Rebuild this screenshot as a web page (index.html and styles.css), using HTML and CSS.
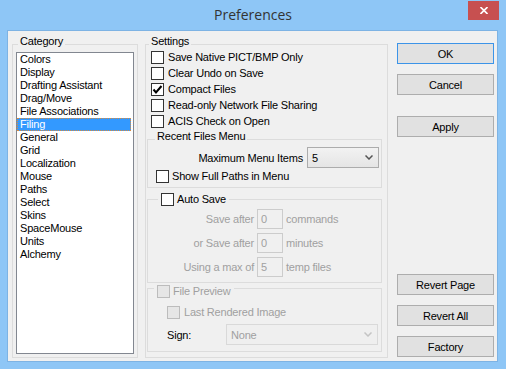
FILE: index.html
```html
<!DOCTYPE html>
<html lang="en">
<head>
    <meta charset="UTF-8">
    <title>Preferences</title>
    <link rel="stylesheet" href="styles.css">
</head>
<body>
    <div class="window">
        <div class="titlebar">
            <span class="title">Preferences</span>
            <div class="close">
                <svg width="8" height="7" viewBox="0 0 8 7"><path d="M0.5 0 L7.5 7 M7.5 0 L0.5 7" stroke="#fff" stroke-width="1.6"/></svg>
            </div>
        </div>

        <div class="client">
            <!-- Category -->
            <div class="group category">
                <div class="group-title">Category</div>
                <ul class="listbox">
                    <li>Colors</li>
                    <li>Display</li>
                    <li>Drafting Assistant</li>
                    <li>Drag/Move</li>
                    <li>File Associations</li>
                    <li class="selected">Filing</li>
                    <li>General</li>
                    <li>Grid</li>
                    <li>Localization</li>
                    <li>Mouse</li>
                    <li>Paths</li>
                    <li>Select</li>
                    <li>Skins</li>
                    <li>SpaceMouse</li>
                    <li>Units</li>
                    <li>Alchemy</li>
                </ul>
            </div>

            <!-- Settings -->
            <div class="group settings">
                <div class="group-title">Settings</div>
                <div class="checks">
                    <div class="check"><span class="box"></span>Save Native PICT/BMP Only</div>
                    <div class="check"><span class="box"></span>Clear Undo on Save</div>
                    <div class="check"><span class="box"><svg width="11" height="11" viewBox="0 0 11 11"><path d="M1.5 5.5 L4 8.5 L9.5 2" fill="none" stroke="#000" stroke-width="2"/></svg></span>Compact Files</div>
                    <div class="check"><span class="box"></span>Read-only Network File Sharing</div>
                    <div class="check"><span class="box"></span>ACIS Check on Open</div>
                </div>

                <div class="group sub recent">
                    <div class="group-title">Recent Files Menu</div>
                    <div class="menu-row">
                        <span>Maximum Menu Items</span>
                        <div class="combo">
                            <span>5</span>
                            <svg width="8" height="5" viewBox="0 0 8 5"><path d="M0.5 0.5 L4 4 L7.5 0.5" fill="none" stroke="#555" stroke-width="1.5"/></svg>
                        </div>
                    </div>
                    <div class="check paths"><span class="box"></span>Show Full Paths in Menu</div>
                </div>

                <div class="group sub autosave">
                    <div class="group-title check-title"><span class="box"></span>Auto Save</div>
                    <div class="save-rows disabled">
                        <span class="save-label">Save after</span><span class="field">0</span><span>commands</span>
                        <span class="save-label">or Save after</span><span class="field">0</span><span>minutes</span>
                        <span class="save-label">Using a max of</span><span class="field">5</span><span>temp files</span>
                    </div>
                </div>

                <div class="group sub preview">
                    <div class="group-title check-title disabled"><span class="box off"></span>File Preview</div>
                    <div class="check last disabled"><span class="box off"></span>Last Rendered Image</div>
                    <div class="sign-row">
                        <span>Sign:</span>
                        <div class="combo off">
                            <span>None</span>
                            <svg width="8" height="5" viewBox="0 0 8 5"><path d="M0.5 0.5 L4 4 L7.5 0.5" fill="none" stroke="#c4c4c4" stroke-width="1.5"/></svg>
                        </div>
                    </div>
                </div>
            </div>

            <!-- Buttons -->
            <div class="buttons">
                <button class="btn default">OK</button>
                <button class="btn cancel">Cancel</button>
                <button class="btn apply">Apply</button>
                <button class="btn revert">Revert Page</button>
                <button class="btn">Revert All</button>
                <button class="btn">Factory</button>
            </div>
        </div>
    </div>
</body>
</html>
```

FILE: styles.css
```css
* {
    box-sizing: border-box;
}
body {
    margin: 0;
    background-color: #8ec6f6;
    font-family: "Liberation Sans", Arial, sans-serif;
    font-size: 11px;
    letter-spacing: -0.2px;
    color: #000;
}
.window {
    width: 506px;
    height: 369px;
}
.titlebar {
    position: relative;
    height: 30px;
    text-align: center;
}
.title {
    font-family: "Open Sans", "Noto Sans", sans-serif;
    font-size: 14px;
    letter-spacing: 0;
    line-height: 30px;
    color: #333;
}
.close {
    position: absolute;
    top: 1px;
    right: 7px;
    width: 31px;
    height: 19px;
    background-color: #c75050;
    display: flex;
    align-items: center;
    justify-content: center;
}
.client {
    margin: 0 8px 0 7px;
    height: 332px;
    border: 1px solid #7db3e4;
    background-color: #f0f0f0;
    display: grid;
    grid-template-columns: 126px 244px 98px;
    column-gap: 7px;
    padding: 12px 2px 3px 4px;
}
.group {
    border: 1px solid #dcdcdc;
    display: flex;
    flex-direction: column;
}
.group-title {
    align-self: flex-start;
    background-color: #f0f0f0;
    padding: 0 2px;
    line-height: 13px;
    margin-top: -10px;
}
.category, .settings {
    margin-top: 1px;
}
.category .group-title {
    margin-left: 5px;
}
.listbox {
    flex: 1;
    list-style: none;
    margin: 4px 3px 3px;
    padding: 0 2px 0 0;
    border: 1px solid #828790;
    background-color: #fff;
}
.listbox li {
    line-height: 13px;
    height: 13px;
    padding-left: 3px;
    white-space: nowrap;
}
.listbox li.selected {
    background-color: #3399ff;
    color: #fff;
    outline: 1px dotted #d98a3c;
    outline-offset: -1px;
}
.settings {
    margin-right: 1px;
}
.settings > .group-title {
    margin-left: 3px;
}
.checks {
    margin-top: 1px;
}
.check {
    display: flex;
    align-items: center;
    gap: 4px;
    height: 16px;
    padding-left: 5px;
    white-space: nowrap;
}
.box {
    width: 13px;
    height: 13px;
    flex: none;
    border: 1px solid #333;
    background-color: #fff;
    display: flex;
    align-items: center;
    justify-content: center;
}
.box.off {
    border-color: #bcbcbc;
    background-color: #e6e6e6;
}
.disabled {
    color: #a0a0a0;
}
.sub {
    margin-left: 1px;
    margin-right: 5px;
}
.recent {
    margin-top: 10px;
    padding-bottom: 3px;
}
.recent .group-title {
    margin-left: 7px;
}
.menu-row {
    display: flex;
    justify-content: flex-end;
    align-items: center;
    gap: 4px;
    margin-top: 4px;
    padding-right: 2px;
}
.combo {
    width: 72px;
    height: 21px;
    border: 1px solid #acacac;
    background: linear-gradient(#f2f2f2, #e5e5e5);
    display: flex;
    align-items: center;
    justify-content: space-between;
    padding: 0 5px 0 4px;
}
.combo.off {
    width: 152px;
    margin-left: auto;
    border-color: #d9d9d9;
    background: #efefef;
    color: #a0a0a0;
}
.recent .paths {
    padding-left: 8px;
    gap: 3px;
}
.autosave {
    margin-top: 11px;
    padding-bottom: 3px;
}
.check-title {
    display: flex;
    align-items: center;
    gap: 3px;
    height: 16px;
    padding: 0 3px;
    white-space: nowrap;
}
.autosave .check-title {
    margin-top: -9px;
    margin-left: 10px;
}
.save-rows {
    display: grid;
    grid-template-columns: 106px 26px auto;
    grid-auto-rows: 24px;
    column-gap: 3px;
    align-items: center;
}
.save-label {
    text-align: right;
}
.field {
    height: 20px;
    line-height: 18px;
    border: 1px solid #cccccc;
    background-color: #f0f0f0;
    padding-left: 3px;
}
.preview {
    margin-top: 5px;
    padding-bottom: 6px;
}
.preview .check-title {
    margin-top: -6px;
    margin-left: 6px;
}
.preview .last {
    margin-top: 5px;
    padding-left: 19px;
}
.sign-row {
    display: flex;
    align-items: center;
    margin-top: 4px;
    padding: 0 3px 0 19px;
}
.buttons {
    display: flex;
    flex-direction: column;
    padding-bottom: 1px;
    margin-left: 1px;
}
.btn {
    height: 21px;
    flex: none;
    border: 1px solid #adadad;
    background-color: #e1e1e1;
    font-family: "Liberation Sans", Arial, sans-serif;
    font-size: 11px;
    letter-spacing: -0.2px;
    color: #000;
    padding: 0;
    margin-top: 10px;
}
.btn.default {
    margin-top: 0;
    border-color: #3c94e8;
}
.btn.apply {
    margin-top: 21px;
}
.btn.revert {
    margin-top: auto;
}
```
